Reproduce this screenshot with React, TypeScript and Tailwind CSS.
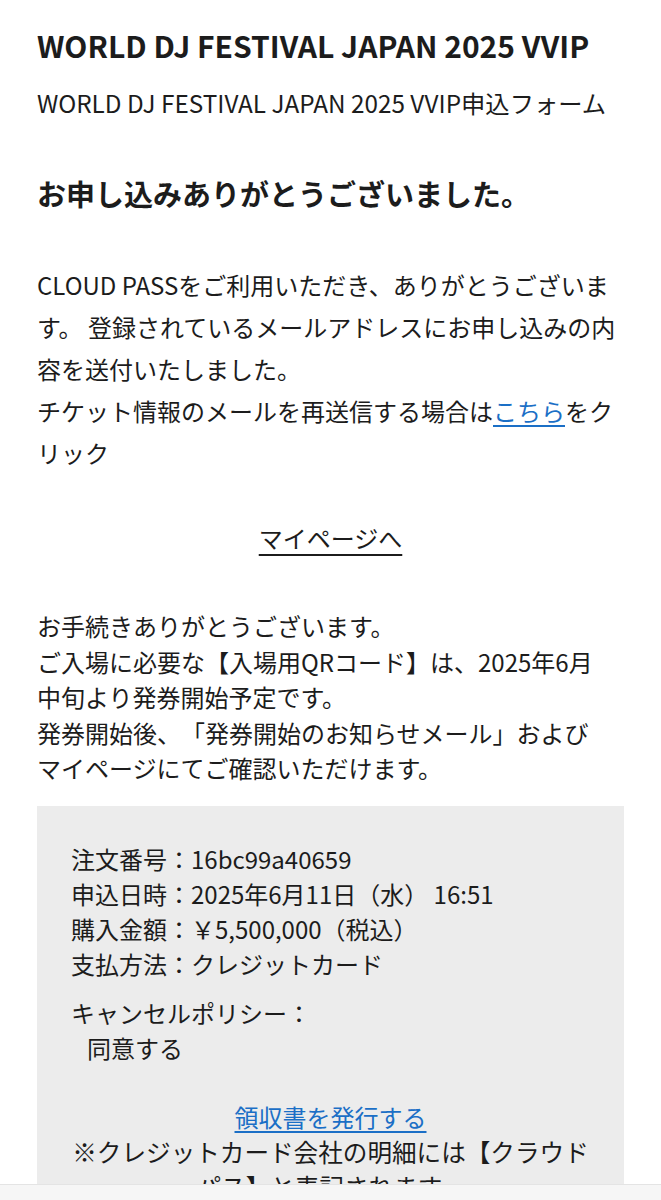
import React from "react";

const FONT = { fontFamily: '"Noto Sans CJK JP", "Noto Sans", sans-serif' };

function InfoRow({ label, value }: { label: string; value: string }) {
  return (
    <div>
      {label}：{value}
    </div>
  );
}

export default function App() {
  return (
    <div className="min-h-[1200px] bg-white text-[#1c1c1c] [text-spacing-trim:space-all]" style={FONT}>
      <div className="px-[37px] pt-[24px] pb-10">
        <h1 className="text-[30px] font-bold leading-[42px]">WORLD DJ FESTIVAL JAPAN 2025 VVIP</h1>
        <p className="mt-[19px] text-[24.3px] leading-[36px]">WORLD DJ FESTIVAL JAPAN 2025 VVIP申込フォーム</p>

        <h2 className="mt-[51px] text-[29px] font-bold leading-[42px]">お申し込みありがとうございました。</h2>

        <div className="mt-[50px] text-[24px] leading-[42px]">
          <p>CLOUD PASSをご利用いただき、ありがとうございます。 登録されているメールアドレスにお申し込みの内容を送付いたしました。</p>
          <p>
            チケット情報のメールを再送信する場合は
            <a href="#" className="text-[#1b6fc6] underline underline-offset-4">
              こちら
            </a>
            をクリック
          </p>
        </div>

        <div className="mt-[46px] text-center text-[24px] leading-[36px]">
          <a href="#" className="underline underline-offset-[6px]">
            マイページへ
          </a>
        </div>

        <div className="mt-[52px] text-[24px] leading-[35.5px]">
          <p>お手続きありがとうございます。</p>
          <p>
            ご入場に必要な【入場用QRコード】は、2025年6月
            <br />
            中旬より発券開始予定です。
          </p>
          <p>
            発券開始後、「発券開始のお知らせメール」および
            <br />
            マイページにてご確認いただけます。
          </p>
        </div>

        <div className="mt-[20px] bg-[#ececec] px-[34px] pt-[35px] pb-10 text-[24px] leading-[35px]">
          <InfoRow label="注文番号" value="16bc99a40659" />
          <InfoRow label="申込日時" value="2025年6月11日（水） 16:51" />
          <InfoRow label="購入金額" value="￥5,500,000（税込）" />
          <InfoRow label="支払方法" value="クレジットカード" />

          <div className="mt-[14px]">キャンセルポリシー：</div>
          <div className="pl-[16px]">同意する</div>

          <div className="mt-[34px] text-center">
            <a href="#" className="text-[#1b6fc6] underline underline-offset-4">
              領収書を発行する
            </a>
          </div>
          <p className="text-center text-[24.6px]">※クレジットカード会社の明細には【クラウドパス】と表記されます。</p>
        </div>
      </div>

      <div className="fixed bottom-0 left-0 right-0 h-[16px] border-t border-[#e4e4e4] bg-[#f6f6f6]" />
    </div>
  );
}
